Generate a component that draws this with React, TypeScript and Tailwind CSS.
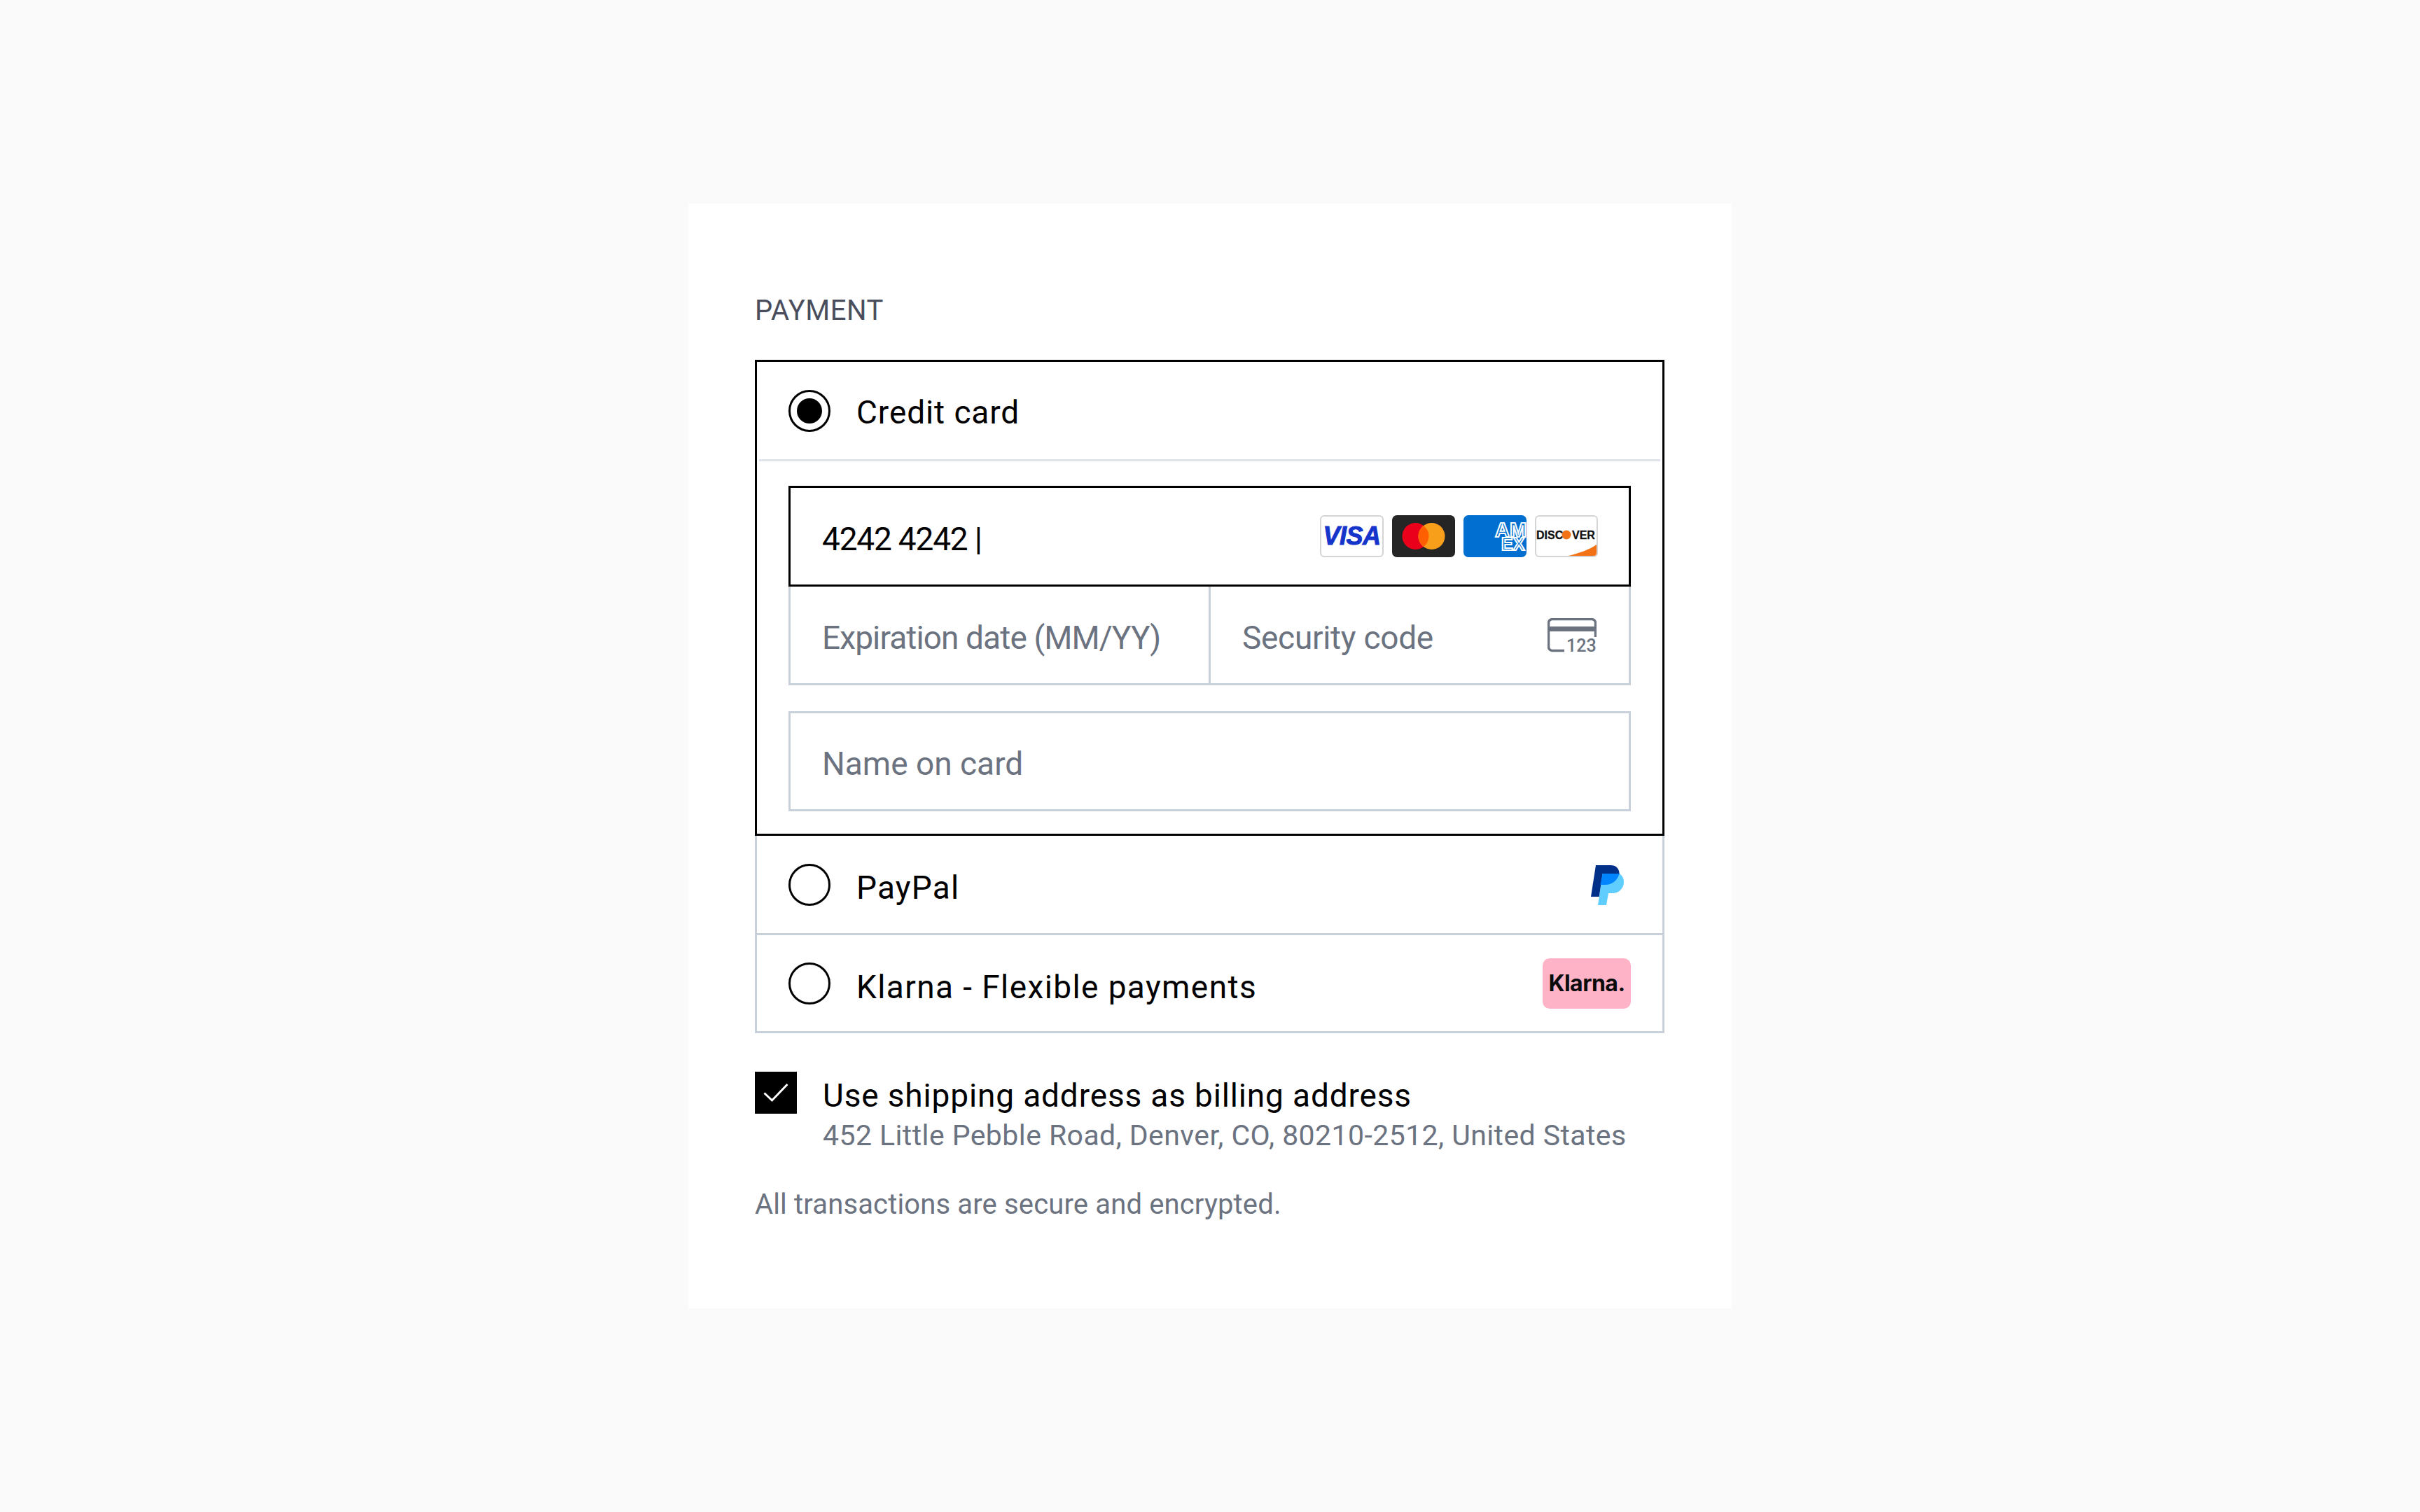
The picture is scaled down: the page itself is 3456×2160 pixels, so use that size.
const font = { fontFamily: 'Roboto, sans-serif' };

const Radio = ({ checked = false }: { checked?: boolean }) => (
  <span className="flex h-[60px] w-[60px] shrink-0 items-center justify-center rounded-full border-[3px] border-black">
    {checked && <span className="h-[36px] w-[36px] rounded-full bg-black" />}
  </span>
);

const VisaLogo = () => (
  <span className="flex h-[60px] w-[91px] items-center justify-center rounded-[6px] border-[2px] border-[#d4d4d6] bg-white">
    <span className="text-[36px] font-bold italic leading-none tracking-[-0.5px] text-[#1434cb] [-webkit-text-stroke:1px_#1434cb]" style={{ fontFamily: '"Liberation Sans", sans-serif' }}>VISA</span>
  </span>
);

const MastercardLogo = () => (
  <svg width="90" height="60" viewBox="0 0 90 60">
    <rect width="90" height="60" rx="7" fill="#252525" />
    <circle cx="33.500" cy="30" r="19" fill="#eb001b" />
    <circle cx="56.500" cy="30" r="19" fill="#f79e1b" />
    <path d="M45 14.900a19 19 0 0 1 0 30.200 19 19 0 0 1 0-30.200z" fill="#ff5f00" />
  </svg>
);

const AmexLogo = () => (
  <span className="relative block h-[60px] w-[90px] overflow-hidden rounded-[7px] bg-[#016fd0]">
    <svg width="90" height="60" viewBox="0 0 90 60" className="absolute left-0 top-0">
      <text x="45" y="31" fontSize="29" fontWeight="700" fill="#016fd0" stroke="#fff" strokeWidth="2" fontFamily="Liberation Sans, sans-serif">AM</text>
      <text x="54" y="50" fontSize="25" fontWeight="700" fill="#016fd0" stroke="#fff" strokeWidth="2" fontFamily="Liberation Sans, sans-serif">EX</text>
    </svg>
  </span>
);

const DiscoverLogo = () => (
  <span className="relative block h-[60px] w-[90px] overflow-hidden rounded-[6px] border-[2px] border-[#d4d4d6] bg-white">
    <svg width="86" height="56" viewBox="0 0 86 56" className="absolute left-0 top-0">
      <path d="M46 56C62 52 76 47 86 40V56z" fill="#f47216" />
      <text x="0" y="32" fontSize="16" fontWeight="700" fill="#111" stroke="#111" strokeWidth="0.3" fontFamily="Liberation Sans, sans-serif">DISC</text>
      <circle cx="43" cy="26" r="6.500" fill="#f47216" />
      <text x="51" y="32" fontSize="16" fontWeight="700" fill="#111" stroke="#111" strokeWidth="0.3" fontFamily="Liberation Sans, sans-serif">VER</text>
    </svg>
  </span>
);

const CvcIcon = () => (
  <svg width="70" height="56" viewBox="0 0 70 56" fill="none" className="mt-[8px]">
    <path d="M24 46.500H7a5.500 5.500 0 0 1-5.500-5.500V7A5.500 5.500 0 0 1 7 1.500h56A5.500 5.500 0 0 1 68.500 7v20" stroke="#6b7280" strokeWidth="3.500" />
    <rect x="2" y="12" width="66" height="7" fill="#6b7280" />
    <text x="27" y="48" fontSize="25" fontWeight="500" fill="#6b7280" fontFamily="Roboto, sans-serif">123</text>
  </svg>
);

const PaypalLogo = () => (
  <svg width="48" height="58" viewBox="0 0 48 58" className="mt-[3px]">
    <path d="M16.700 12H41C45 15 47 19 47 24C47 33 40 40 31 40H25L22 57H10z" fill="#60cdff" />
    <path d="M7 0H28C36 0 41 5 40.500 13L16.700 12 11.700 45H0z" fill="#003087" />
    <path d="M16.700 12H40.500C38 22 30 28 20 28H13.500z" fill="#0085ff" />
  </svg>
);

const KlarnaLogo = () => (
  <span className="flex h-[72px] w-[126px] items-center justify-center rounded-[10px] bg-[#ffb3c7]">
    <span className="text-[32px] font-bold leading-none tracking-[-0.5px] text-[#0b0b0b]" style={{ fontFamily: 'Inter, sans-serif' }}>Klarna.</span>
  </span>
);

export default function App() {
  return (
    <div className="flex min-h-screen items-center justify-center bg-[#fafafa]" style={font}>
      <div className="h-[1578px] w-[1490px] bg-white px-[95px] pt-[128px]">
        <h2 className="h-[95px] text-[40px] leading-[50px] tracking-[0.5px] text-[#4a4e5c]">PAYMENT</h2>

        {/* selected card option */}
        <div className="h-[680px] w-[1299px] border-[3px] border-black">
          <div className="flex h-[139px] items-center gap-[37px] pl-[45px]">
            <Radio checked />
            <span className="pt-[6px] text-[46px] tracking-[0.9px] text-black">Credit card</span>
          </div>
          <div className="mx-[3px] h-[3px] bg-[#dfe4ea]" />
          <div className="px-[45px] pt-[35px]">
            <div className="flex h-[144px] w-[1203px] items-center justify-between border-[3px] border-black pl-[45px] pr-[44px]">
              <span className="pt-[8px] text-[46px] tracking-[-1.2px] text-black">4242 4242 |</span>
              <div className="flex items-center gap-[12px]">
                <VisaLogo />
                <MastercardLogo />
                <AmexLogo />
                <DiscoverLogo />
              </div>
            </div>
            <div className="flex h-[141px] w-[1203px] border-x-[3px] border-b-[3px] border-[#c8d0da]">
              <div className="flex w-[600px] items-center border-r-[3px] border-[#c8d0da] pl-[45px]">
                <span className="pt-[8px] text-[46px] tracking-[-0.9px] text-[#6b7280]">Expiration date (MM/YY)</span>
              </div>
              <div className="flex flex-1 items-center justify-between pl-[45px] pr-[46px]">
                <span className="pt-[8px] text-[46px] tracking-[-0.3px] text-[#6b7280]">Security code</span>
                <CvcIcon />
              </div>
            </div>
            <div className="mt-[37px] flex h-[143px] w-[1203px] items-center border-[3px] border-[#c8d0da] pl-[45px]">
              <span className="pt-[8px] text-[46px] text-[#6b7280]">Name on card</span>
            </div>
          </div>
        </div>

        <div className="flex h-[142px] w-[1299px] items-center justify-between border-x-[3px] border-b-[3px] border-[#c8d0da] pl-[45px] pr-[54px]">
          <div className="flex items-center gap-[37px]">
            <Radio />
            <span className="pt-[10px] text-[46px] tracking-[1.2px] text-black">PayPal</span>
          </div>
          <PaypalLogo />
        </div>

        <div className="flex h-[140px] w-[1299px] items-center justify-between border-x-[3px] border-b-[3px] border-[#c8d0da] pl-[45px] pr-[45px]">
          <div className="flex items-center gap-[37px]">
            <Radio />
            <span className="pt-[12px] text-[46px] tracking-[1.4px] text-black">Klarna - Flexible payments</span>
          </div>
          <KlarnaLogo />
        </div>

        <div className="mt-[55px] flex gap-[37px]">
          <span className="flex h-[60px] w-[60px] shrink-0 items-center justify-center bg-black">
            <svg width="36" height="28" viewBox="0 0 36 28" fill="none">
              <path d="M1.500 14.500 12.500 25 34.500 2" stroke="#fff" strokeWidth="3" />
            </svg>
          </span>
          <div className="pt-[5px]">
            <p className="text-[46px] leading-[58px] tracking-[0.85px] text-black">Use shipping address as billing address</p>
            <p className="text-[41px] leading-[56px] tracking-[0.42px] text-[#6b7280]">452 Little Pebble Road, Denver, CO, 80210-2512, United States</p>
          </div>
        </div>

        <p className="mt-[46px] text-[40px] leading-[50px] tracking-[0.15px] text-[#6b7280]">All transactions are secure and encrypted.</p>
      </div>
    </div>
  );
}
